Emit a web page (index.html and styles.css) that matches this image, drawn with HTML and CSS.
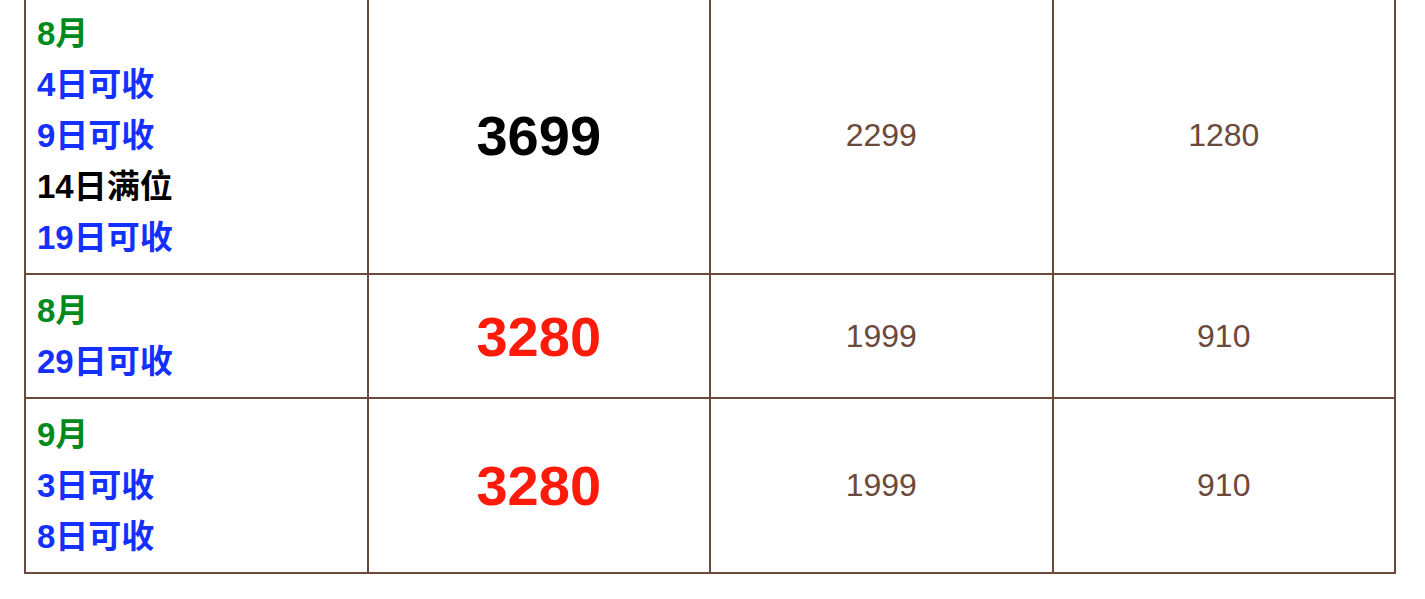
FILE: index.html
```html
<!DOCTYPE html>
<html lang="zh">
<head>
<meta charset="utf-8">
<link rel="stylesheet" href="styles.css">
</head>
<body>
<table class="price">
  <tr>
    <td class="dates">
      <div class="month">8月</div>
      <div class="ok">4日可收</div>
      <div class="ok">9日可收</div>
      <div class="full">14日满位</div>
      <div class="ok">19日可收</div>
    </td>
    <td class="big">3699</td>
    <td class="num">2299</td>
    <td class="num">1280</td>
  </tr>
  <tr>
    <td class="dates">
      <div class="month">8月</div>
      <div class="ok">29日可收</div>
    </td>
    <td class="big red">3280</td>
    <td class="num">1999</td>
    <td class="num">910</td>
  </tr>
  <tr>
    <td class="dates">
      <div class="month">9月</div>
      <div class="ok">3日可收</div>
      <div class="ok">8日可收</div>
    </td>
    <td class="big red">3280</td>
    <td class="num">1999</td>
    <td class="num">910</td>
  </tr>
</table>
</body>
</html>
```
FILE: styles.css
```css
html, body {
  margin: 0;
  padding: 0;
  background: #ffffff;
}
body {
  font-family: "Liberation Sans", Arial, "Noto Sans CJK SC", sans-serif;
}
.price {
  border-collapse: collapse;
  margin: -4px 0 0 24px;
  width: 1372px;
  table-layout: fixed;
}
.price td {
  border: 2px solid #6b4a3c;
  padding: 10px 11px;
  vertical-align: middle;
}
.price td.dates {
  padding: 10px 11px 10px;
  font-size: 33px;
  font-weight: bold;
  line-height: 51px;
  text-align: left;
}
.month { color: #008a1e; }
.ok { color: #1430ff; }
.full { color: #000000; }
.big {
  text-align: center;
  font-size: 56px;
  font-weight: bold;
  color: #000000;
}
.big.red { color: #ff1a0a; }
.num {
  text-align: center;
  font-size: 32px;
  color: #6b4a3c;
}
```
